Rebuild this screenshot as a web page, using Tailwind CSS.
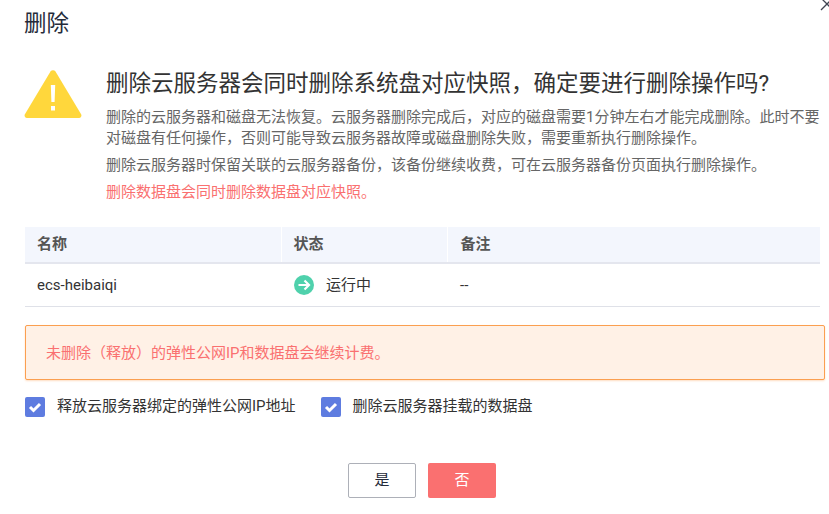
<!DOCTYPE html>
<html lang="zh-CN">
  <head>
    <meta charset="UTF-8" />
    <title>删除</title>
    <script src="https://cdn.jsdelivr.net/npm/@tailwindcss/browser@4"></script>
  </head>
  <body class="bg-white">
    <div class="relative w-[829px] h-[514px] overflow-hidden px-[25px] font-['Roboto','Noto_Sans_CJK_SC',sans-serif] text-[#252b3a]">
      <!-- close icon, cut off by the window edge -->
      <svg class="absolute top-[-3px] left-[820px] w-[14px] h-[14px]" viewBox="0 0 14 14" fill="none" stroke="#3f4451" stroke-width="1.3">
        <path d="M1 1l12 12M13 1L1 13" />
      </svg>

      <h1 class="pt-[8px] -ml-px h-[77px] text-[22.5px] leading-[30px] font-normal">删除</h1>

      <!-- warning -->
      <div class="flex h-[150px]">
        <svg class="w-[58px] h-[50px] mt-[-8px] ml-[-1px] shrink-0" viewBox="0 0 58 50">
          <path d="M26.5 2.5a3 3 0 0 1 5 0l25.6 42.8a2.5 2.5 0 0 1-2.1 3.7H3a2.5 2.5 0 0 1-2.1-3.7z" fill="#ffd73c" />
          <path d="M26.800 16h4.400l-.6 17h-3.200zM27 37h4v4.500h-4z" fill="#fff" />
        </svg>
        <div class="ml-[24px] -mt-[9px]">
          <h2 class="text-[22.5px] leading-[30px] font-normal text-[#333] whitespace-nowrap">删除云服务器会同时删除系统盘对应快照，确定要进行删除操作吗?</h2>
          <p class="mt-[9px] w-[716px] text-[15px] leading-[21px] text-[#666]">删除的云服务器和磁盘无法恢复。云服务器删除完成后，对应的磁盘需要1分钟左右才能完成删除。此时不要对磁盘有任何操作，否则可能导致云服务器故障或磁盘删除失败，需要重新执行删除操作。</p>
          <p class="mt-[6px] text-[15px] leading-[21px] text-[#666]">删除云服务器时保留关联的云服务器备份，该备份继续收费，可在云服务器备份页面执行删除操作。</p>
          <p class="mt-[6px] text-[15px] leading-[21px] text-[#fa7070]">删除数据盘会同时删除数据盘对应快照。</p>
        </div>
      </div>

      <!-- table -->
      <table class="w-[795px] table-fixed border-collapse text-[15px]">
        <thead>
          <tr class="h-[36px] bg-[#f3f6fd] border-b-2 border-[#e4e6ee] text-left text-[#555]">
            <th class="w-[256px] pl-[12px] font-bold border-r border-white">名称</th>
            <th class="w-[166px] pl-[12px] font-bold border-r border-white">状态</th>
            <th class="pl-[13px] font-bold">备注</th>
          </tr>
        </thead>
        <tbody>
          <tr class="h-[43px] border-b border-[#dfe1e8] text-[#333]">
            <td class="pl-[12px]">ecs-heibaiqi</td>
            <td class="pl-[13px]">
              <div class="flex items-center">
                <span class="flex items-center justify-center w-5 h-5 rounded-full bg-[#4fd1ac]">
                  <svg class="w-[14px] h-[14px]" viewBox="0 0 14 14" fill="none" stroke="#fff" stroke-width="2.200">
                    <path d="M1.500 7h10M7.500 2.500L12 7l-4.500 4.500" />
                  </svg>
                </span>
                <span class="ml-[12px]">运行中</span>
              </div>
            </td>
            <td class="pl-[13px]">--</td>
          </tr>
        </tbody>
      </table>

      <!-- alert -->
      <div class="mt-[18px] flex items-center w-[800px] h-[55px] pl-[20px] pt-[3px] bg-[#fff1e6] border border-[#fb9f50] rounded-[2px] shadow-[0_1px_2px_rgba(251,159,80,0.35)] text-[15px] text-[#fa7070]">未删除（释放）的弹性公网IP和数据盘会继续计费。</div>

      <!-- options -->
      <div class="mt-[17px] flex items-center h-[20px] text-[15px] text-[#333]">
        <span class="flex items-center justify-center w-5 h-5 rounded-[2px] bg-[#5e7ce0]">
          <svg class="w-[14px] h-[14px]" viewBox="0 0 14 14" fill="none" stroke="#fff" stroke-width="3">
            <path d="M2 7l3.500 3.500L12 4" />
          </svg>
        </span>
        <span class="ml-[12px]">释放云服务器绑定的弹性公网IP地址</span>
        <span class="ml-[25px] flex items-center justify-center w-5 h-5 rounded-[2px] bg-[#5e7ce0]">
          <svg class="w-[14px] h-[14px]" viewBox="0 0 14 14" fill="none" stroke="#fff" stroke-width="3">
            <path d="M2 7l3.500 3.500L12 4" />
          </svg>
        </span>
        <span class="ml-[12px]">删除云服务器挂载的数据盘</span>
      </div>

      <!-- buttons -->
      <div class="mt-[46px] flex justify-center gap-[12px] ml-[-3px] w-[800px] text-[15px]">
        <button class="w-[68px] h-[35px] bg-white border border-[#adb0b8] rounded-[2px] text-[#252b3a]">是</button>
        <button class="w-[68px] h-[35px] bg-[#fa7070] rounded-[2px] text-white">否</button>
      </div>
    </div>
  </body>
</html>
